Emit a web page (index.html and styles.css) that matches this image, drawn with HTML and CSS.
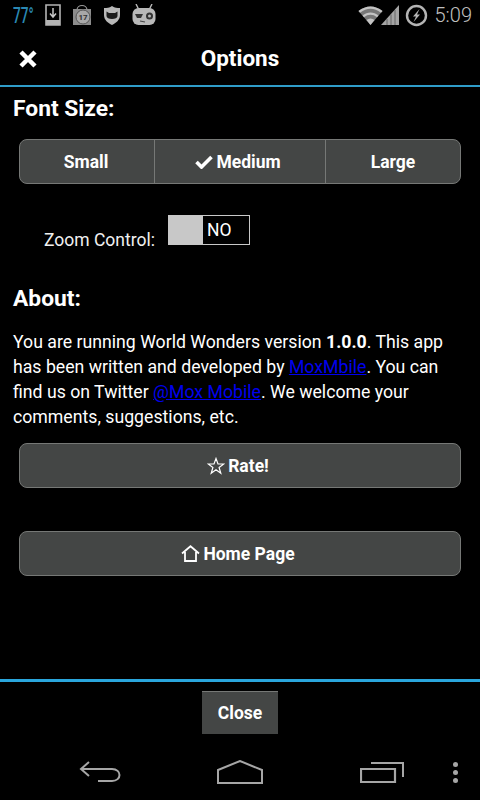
FILE: index.html
```html
<!DOCTYPE html>
<html>

  <head>
    <title>Options</title>
    <link rel="stylesheet" href="styles.css">
  </head>

  <body>

    <div class="status_bar">
      <span class="weather">77°</span>
      <svg class="status_icon download_icon" width="16" height="22" viewBox="0 0 16 22">
        <path d="M1 1H15V21H1Z" fill="none" stroke="#b4b4b4" stroke-width="1.6"/>
        <path d="M1 16H15V21H1Z" fill="#b4b4b4"/>
        <path d="M8 4V12M5 9.5L8 13L11 9.5" fill="none" stroke="#c8c8c8" stroke-width="1.5"/>
      </svg>
      <svg class="status_icon calendar_icon" width="20" height="22" viewBox="0 0 20 22">
        <path d="M5 6C5 0 15 0 15 6" fill="none" stroke="#999" stroke-width="1.2"/>
        <path d="M1 5H19V21H1Z" fill="#8c8c8c"/>
        <circle cx="11" cy="13" r="7" fill="#a8a8a8" stroke="#555" stroke-width="1"/>
        <text x="11" y="16" class="calendar_text">17</text>
      </svg>
      <svg class="status_icon shield_icon" width="18" height="20" viewBox="0 0 18 20">
        <path d="M9 1C12 3 14 3 17 3V10C17 15 13 18 9 20C5 18 1 15 1 10V3C4 3 6 3 9 1Z" fill="#b8b8b8"/>
        <path d="M3.5 6.5L6 8H12L14.500 6.500V11C14.500 13 12 14 9 14C6 14 3.500 13 3.500 11Z" fill="#1c1c1c"/>
      </svg>
      <svg class="status_icon mod_icon" width="24" height="22" viewBox="0 0 24 22">
        <path d="M4 0L6.500 5M20 0L17.500 5" stroke="#b8b8b8" stroke-width="1.400"/>
        <rect x="0.500" y="4" width="23" height="17" rx="6" fill="#b8b8b8"/>
        <path d="M3 10L11 10L9 14H5Z" fill="#333"/>
        <circle cx="17.500" cy="12" r="3.500" fill="#333"/>
        <circle cx="17.500" cy="12" r="1.500" fill="#b8b8b8"/>
        <path d="M8 17L13 18" stroke="#444" stroke-width="1.200"/>
      </svg>

      <div class="status_right">
        <svg class="wifi_icon" width="25" height="20" viewBox="0 0 25 20">
          <path d="M0.500 6C8 0 17 0 24.500 6L12.500 20Z" fill="#777"/>
          <path d="M0.500 6C8 0 17 0 24.500 6L23 7.800C16 2.500 9 2.500 2 7.800Z" fill="#c4c4c4"/>
          <path d="M4.500 10.500C9.500 6.500 15.500 6.500 20.500 10.500L19 12.300C15 9 10 9 6 12.300Z" fill="#c4c4c4"/>
          <path d="M8.500 15C11 13 14 13 16.500 15L12.500 20Z" fill="#c4c4c4"/>
        </svg>
        <svg class="signal_icon" width="18" height="20" viewBox="0 0 18 20">
          <path d="M0 20L18 0V20Z" fill="#a4a4a4"/>
          <path d="M6 14V20M10 9.500V20M14 5V20" stroke="#555" stroke-width="0.800"/>
        </svg>
        <svg class="battery_icon" width="23" height="23" viewBox="0 0 23 23">
          <circle cx="11.500" cy="11.500" r="9.500" fill="none" stroke="#b4b4b4" stroke-width="2.400"/>
          <path d="M14.500 5L8 12.500H11L8.500 18L15 10.500H12Z" fill="#b4b4b4"/>
        </svg>
        <span class="clock">5:09</span>
      </div>
    </div>

    <div class="header">
      <svg class="close_icon" width="20" height="20" viewBox="0 0 20 20">
        <path d="M3 3L17 17M17 3L3 17" stroke="#fff" stroke-width="4.500"/>
      </svg>
      <span class="header_title">Options</span>
    </div>

    <div class="content">

      <h2 class="section_title">Font Size:</h2>

      <div class="segments">
        <div class="segment segment_small">Small</div>
        <div class="segment segment_medium">
          <svg class="check_icon" width="18" height="14" viewBox="0 0 18 14">
            <path d="M1.500 7L6.500 12L16.500 2" fill="none" stroke="#fff" stroke-width="3.600"/>
          </svg>
          Medium
        </div>
        <div class="segment segment_large">Large</div>
      </div>

      <div class="zoom_row">
        <span class="zoom_label">Zoom Control:</span>
        <div class="switch">
          <div class="switch_thumb"></div>
          <div class="switch_state">NO</div>
        </div>
      </div>

      <h2 class="section_title about_title">About:</h2>

      <p class="about_text">You are running World Wonders version <b>1.0.0</b>. This app<br>has been written and developed by <a href="#">MoxMbile</a>. You can<br>find us on Twitter <a href="#">@Mox Mobile</a>. We welcome your<br>comments, suggestions, etc.</p>

      <div class="wide_button rate_button">
        <svg class="button_icon" width="18" height="18" viewBox="0 0 18 18">
          <path d="M9 1.500L11 7H16.800L12.100 10.500L13.800 16.300L9 12.800L4.200 16.300L5.900 10.500L1.200 7H7Z" fill="none" stroke="#fff" stroke-width="1.200"/>
        </svg>
        Rate!
      </div>

      <div class="wide_button home_button">
        <svg class="button_icon" width="19" height="17" viewBox="0 0 19 17">
          <path d="M1 8.500L9.500 1.200L18 8.500M4 7V16H15V7" fill="none" stroke="#fff" stroke-width="1.800"/>
        </svg>
        Home Page
      </div>

    </div>

    <div class="footer">
      <div class="close_button">Close</div>
    </div>

    <div class="nav_bar">
      <svg class="back_icon" width="42" height="22" viewBox="0 0 42 22">
        <path d="M10 1L2 8L10 15M2 8H33C43 8 43 20 33 20H19" fill="none" stroke="#a6a6a6" stroke-width="2"/>
      </svg>
      <svg class="home_icon" width="46" height="24" viewBox="0 0 46 24">
        <path d="M1 23V10L23 1L45 10V23Z" fill="none" stroke="#a6a6a6" stroke-width="2"/>
      </svg>
      <svg class="recent_icon" width="44" height="22" viewBox="0 0 44 22">
        <path d="M1 8H35V21H1Z" fill="none" stroke="#a6a6a6" stroke-width="2.200"/>
        <path d="M11 2H43V16" fill="none" stroke="#a6a6a6" stroke-width="2"/>
      </svg>
      <div class="menu_dots">
        <span></span>
        <span></span>
        <span></span>
      </div>
    </div>

  </body>

</html>
```

FILE: styles.css
```css
html, body
{
  margin: 0;
  padding: 0;
  background: #000;
}

body
{
  display: flex;
  flex-direction: column;
  width: 480px;
  height: 800px;
  overflow: hidden;
  font-family: Roboto, sans-serif;
  color: #fff;
}

.status_bar
{
  display: flex;
  align-items: center;
  flex: none;
  height: 30px;
  padding-left: 13px;
  padding-right: 8px;
}

.weather
{
  width: 20px;
  font-size: 22px;
  font-weight: 500;
  color: #2a88b4;
  transform: scaleX(0.62);
  transform-origin: left center;
}

.status_icon
{
  margin-left: 11px;
}

.download_icon
{
  margin-left: 12px;
}

.calendar_text
{
  font-size: 8px;
  font-weight: 700;
  fill: #333;
  text-anchor: middle;
}

.status_right
{
  display: flex;
  align-items: center;
  margin-left: auto;
}

.signal_icon
{
  margin-left: -2px;
}

.battery_icon
{
  margin-left: 6px;
}

.clock
{
  margin-left: 7px;
  font-size: 20px;
  font-weight: 300;
  color: #c0c0c0;
}

.header
{
  display: flex;
  align-items: center;
  justify-content: center;
  position: relative;
  flex: none;
  height: 55px;
  border-bottom: 2px solid #2f9cc9;
}

.close_icon
{
  position: absolute;
  left: 18px;
  top: 19px;
}

.header_title
{
  font-size: 22.500px;
  font-weight: 700;
}

.content
{
  flex: 1;
  padding: 9px 19px 0 19px;
}

.section_title
{
  margin: 0 0 0 -6px;
  font-size: 22.800px;
  line-height: 26px;
  font-weight: 700;
}

.segments
{
  display: flex;
  height: 43px;
  margin-top: 17px;
  background: #444645;
  border: 1px solid #767876;
  border-radius: 8px;
}

.segment
{
  display: flex;
  align-items: center;
  justify-content: center;
  font-size: 17.500px;
  font-weight: 700;
}

.segment_small
{
  box-sizing: border-box;
  width: 134px;
  padding-right: 2px;
}

.segment_medium
{
  box-sizing: content-box;
  width: 166px;
  padding-right: 4px;
  border-left: 1px solid #767876;
  border-right: 1px solid #767876;
}

.segment_large
{
  flex: 1;
}

.check_icon
{
  margin-right: 3px;
}

.zoom_row
{
  display: flex;
  align-items: flex-start;
  margin-top: 31px;
  padding-left: 25px;
}

.zoom_label
{
  margin-top: 15px;
  font-size: 17.500px;
  line-height: 20px;
  color: #f0f0f0;
}

.switch
{
  display: flex;
  width: 80px;
  height: 28px;
  margin-left: 13px;
  border: 1px solid #c8c8c8;
}

.switch_thumb
{
  width: 34px;
  background: #c8c8c8;
}

.switch_state
{
  flex: 1;
  padding-left: 4px;
  font-size: 17.500px;
  line-height: 28px;
}

.about_title
{
  margin-top: 36px;
}

.about_text
{
  margin: 18px -6px 0 -6px;
  font-size: 17.700px;
  line-height: 25px;
}

.about_text a
{
  color: #0000ee;
}

.wide_button
{
  display: flex;
  align-items: center;
  justify-content: center;
  height: 43px;
  padding-right: 4px;
  background: #444645;
  border: 1px solid #767876;
  border-radius: 8px;
  font-size: 17.500px;
  font-weight: 700;
}

.rate_button
{
  margin-top: 13px;
}

.home_button
{
  margin-top: 43px;
}

.button_icon
{
  margin-right: 3px;
}

.footer
{
  display: flex;
  justify-content: center;
  flex: none;
  height: 73px;
  padding-top: 9px;
  box-sizing: border-box;
  border-top: 3px solid #2aa6dc;
}

.close_button
{
  width: 76px;
  height: 43px;
  background: #444645;
  border-top: 1px solid #767876;
  box-sizing: border-box;
  text-align: center;
  font-size: 17.500px;
  line-height: 42px;
  font-weight: 700;
}

.nav_bar
{
  display: flex;
  align-items: center;
  position: relative;
  flex: none;
  height: 48px;
}

.back_icon
{
  position: absolute;
  left: 79px;
  top: 9px;
}

.home_icon
{
  position: absolute;
  left: 217px;
  top: 8px;
}

.recent_icon
{
  position: absolute;
  left: 360px;
  top: 9px;
}

.menu_dots
{
  display: flex;
  flex-direction: column;
  gap: 3px;
  position: absolute;
  left: 453px;
  top: 10px;
}

.menu_dots span
{
  width: 5px;
  height: 5px;
  border-radius: 50%;
  background: #a6a6a6;
}
```
